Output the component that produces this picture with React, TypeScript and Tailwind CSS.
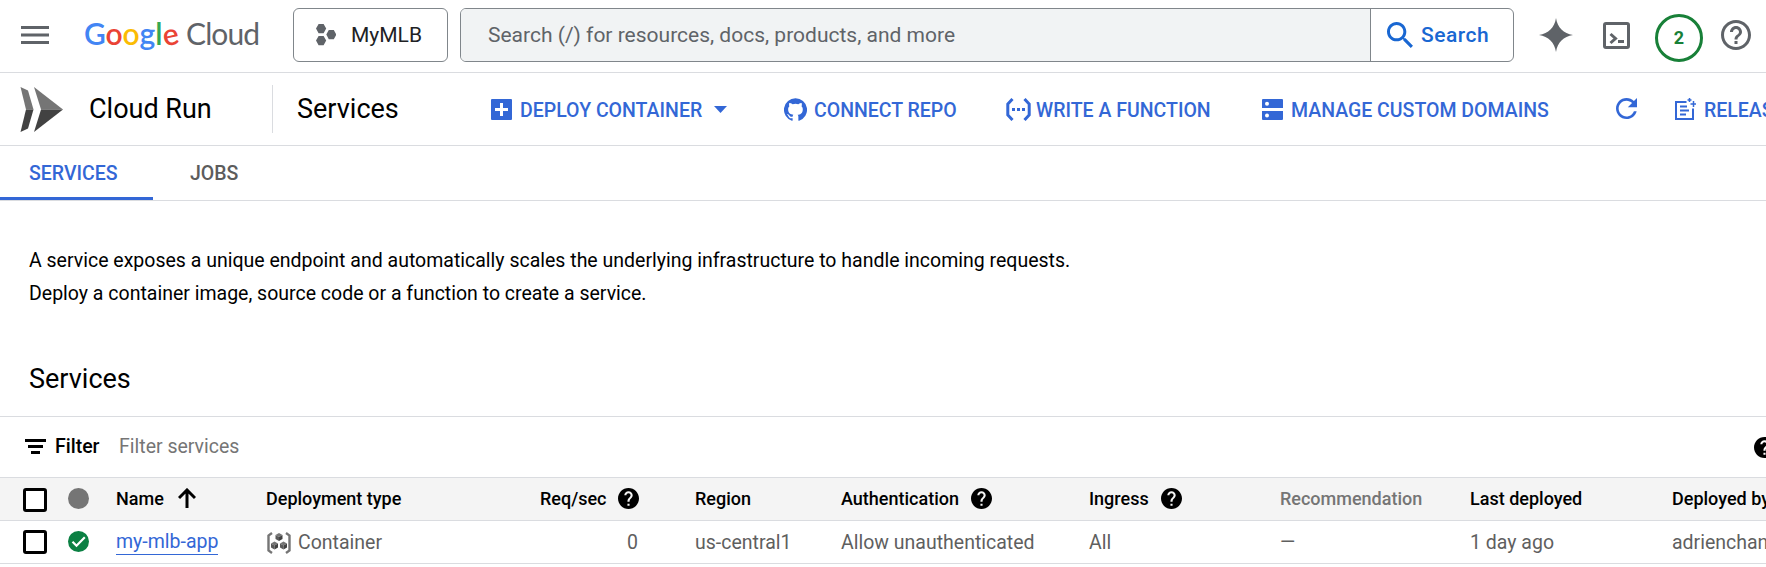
import React from "react";

function HelpFilled() {
  return (
    <svg viewBox="2 2 20 20" className="size-[21px] shrink-0" fill="#000">
      <path d="M12 2C6.48 2 2 6.48 2 12s4.48 10 10 10 10-4.48 10-10S17.52 2 12 2zm1 17h-2v-2h2v2zm2.07-7.75l-.9.92C13.45 12.9 13 13.5 13 15h-2v-.5c0-1.1.45-2.1 1.17-2.83l1.24-1.26c.37-.36.59-.86.59-1.41 0-1.1-.9-2-2-2s-2 .9-2 2H8c0-2.21 1.79-4 4-4s4 1.79 4 4c0 .88-.36 1.68-.93 2.25z" />
    </svg>
  );
}

function Logo() {
  return (
    <div className="mt-[15px] ml-[35px] flex w-[209px] shrink-0 items-baseline font-['Lato',sans-serif] leading-[36px]">
      <span className="w-[102px] shrink-0 whitespace-nowrap text-[30px] font-semibold tracking-[-0.1px]">
        <span className="text-[#4285f4]">G</span>
        <span className="text-[#ea4335]">o</span>
        <span className="text-[#fbbc04]">o</span>
        <span className="text-[#4285f4]">g</span>
        <span className="text-[#34a853]">l</span>
        <span className="inline-block -rotate-12 leading-none text-[#ea4335]">e</span>
      </span>
      <span className="text-[30px] tracking-[-0.9px] text-[#5f6368]">Cloud</span>
    </div>
  );
}

function TopBar() {
  return (
    <header className="flex h-[73px] items-start border-b border-[#dadce0] bg-white">
      <svg viewBox="0 0 28 18" className="mt-[26px] ml-[21px] h-[18px] w-7 shrink-0" fill="#5f6368">
        <path d="M0 0h28v3H0zM0 7.5h28v3H0zM0 15h28v3H0z" />
      </svg>
      <Logo />
      <button className="mt-2 flex h-[54px] w-[155px] shrink-0 items-center rounded-md border border-[#80868b] pl-[22px] text-[21px] text-[#202124]">
        <svg viewBox="0 0 20 22" className="mr-[15px] h-[22px] w-5 shrink-0" fill="#5f6368">
          <path d="M2.6 0h5l2.6 4.6-2.6 4.6h-5L0 4.6zM2.6 12h5l2.6 4.6-2.6 4.6h-5L0 16.6zM12.8 6h5l2.5 4.6-2.5 4.6h-5l-2.5-4.6z" />
        </svg>
        <span className="pt-0.5">MyMLB</span>
      </button>
      <div className="mt-2 ml-3 flex h-[54px] w-[1054px] shrink-0 overflow-hidden rounded-md border border-[#80868b]">
        <div className="flex w-[910px] items-center border-r border-[#80868b] bg-[#f1f3f4] pt-0.5 pl-[27px] text-[21px] text-[#5f6368]">
          Search (/) for resources, docs, products, and more
        </div>
        <div className="flex items-center pl-4 text-[21px] font-medium tracking-[0.5px] text-[#1967d2]">
          <svg viewBox="3 3 17.5 17.5" className="mr-2 size-[26px]" fill="#1967d2">
            <path d="M15.5 14h-.79l-.28-.27C15.41 12.59 16 11.11 16 9.5 16 5.91 13.09 3 9.5 3S3 5.91 3 9.5 5.91 16 9.5 16c1.61 0 3.09-.59 4.23-1.57l.27.28v.79l5 4.99L20.49 19l-4.99-5zm-6 0C7.01 14 5 11.99 5 9.5S7.01 5 9.5 5 14 7.01 14 9.5 11.99 14 9.5 14z" />
          </svg>
          <span className="pt-0.5">Search</span>
        </div>
      </div>
      <svg viewBox="0 0 34 34" className="mt-[18px] ml-[25px] size-[34px] shrink-0" fill="#5f6368">
        <path d="M17 0C18.5 9.5 24.5 15.5 34 17 24.5 18.5 18.5 24.5 17 34 15.5 24.5 9.5 18.5 0 17 9.5 15.5 15.5 9.5 17 0z" />
      </svg>
      <svg viewBox="0 0 27 27" className="mt-[22px] ml-[30px] size-[27px] shrink-0" fill="none" stroke="#5f6368">
        <rect x="1.5" y="1.5" width="24" height="24" rx="1.5" strokeWidth="3" />
        <path d="M7.5 12l5 4.5-5 4.5" strokeWidth="3" />
        <path d="M15 19.5h6" strokeWidth="3" />
      </svg>
      <div className="mt-[14px] ml-[25px] flex size-12 shrink-0 items-center justify-center rounded-full border-[3px] border-[#188038] pb-px text-[18px] font-bold text-[#188038]">
        2
      </div>
      <svg viewBox="2 2 20 20" className="mt-5 ml-[18px] size-[30px] shrink-0" fill="#5f6368">
        <path d="M11 18h2v-2h-2v2zm1-16C6.48 2 2 6.48 2 12s4.48 10 10 10 10-4.48 10-10S17.52 2 12 2zm0 18c-4.41 0-8-3.59-8-8s3.59-8 8-8 8 3.59 8 8-3.59 8-8 8zm0-14c-2.21 0-4 1.79-4 4h2c0-1.1.9-2 2-2s2 .9 2 2c0 2-3 1.75-3 5h2c0-2.25 3-2.5 3-5 0-2.21-1.79-4-4-4z" />
      </svg>
    </header>
  );
}

function Action({ icon, label, className }: { icon: React.ReactNode; label: string; className: string }) {
  return (
    <button className={`flex shrink-0 items-center whitespace-nowrap ${className}`}>
      {icon}
      <span className="pt-1">{label}</span>
    </button>
  );
}

function ServiceBar() {
  return (
    <div className="flex h-[73px] items-center overflow-hidden border-b border-[#dadce0]">
      <svg viewBox="0 0 43 45" className="ml-5 h-[45px] w-[43px] shrink-0">
        <path d="M.5 0l7.5 3.5 5.5 19H6z" fill="#757575" />
        <path d="M13.5 22.5L8 41.5.5 45 6 22.5z" fill="#424242" />
        <path d="M14 0l29 22.5H21z" fill="#757575" />
        <path d="M43 22.5L14 45l7-22.5z" fill="#424242" />
      </svg>
      <div className="ml-[26px] w-[183px] shrink-0 text-[27px] text-black">Cloud Run</div>
      <div className="h-12 w-px shrink-0 bg-[#dadce0]" />
      <div className="ml-6 w-[194px] shrink-0 text-[27px] text-black">Services</div>
      <div className="flex items-center text-[19.5px] font-medium text-[#3367d6]">
        <Action
          className="w-[223px] gap-2"
          label="DEPLOY CONTAINER"
          icon={
            <svg viewBox="0 0 21 21" className="size-[21px]">
              <rect width="21" height="21" rx="1" fill="#3367d6" />
              <path d="M10.5 4v13M4 10.5h13" stroke="#fff" strokeWidth="3" />
            </svg>
          }
        />
        <svg viewBox="0 0 13 7" className="h-[7px] w-[13px] shrink-0" fill="#3367d6">
          <path d="M0 0h13L6.5 7z" />
        </svg>
        <Action
          className="ml-[57px] w-[222px] gap-[7px]"
          label="CONNECT REPO"
          icon={
            <svg viewBox="0 0 24 24" className="size-[23px]" fill="#3367d6">
              <path d="M12 .3a12 12 0 0 0-3.8 23.4c.6.1.8-.3.8-.6v-2c-3.3.7-4-1.6-4-1.6-.6-1.4-1.4-1.8-1.4-1.8-1-.7.1-.7.1-.7 1.2 0 1.9 1.2 1.9 1.2 1 1.8 2.8 1.3 3.5 1 0-.8.4-1.3.7-1.6-2.7-.3-5.5-1.3-5.5-6 0-1.2.5-2.3 1.3-3.1-.2-.4-.6-1.6 0-3.2 0 0 1-.3 3.4 1.2a11.5 11.5 0 0 1 6 0c2.3-1.5 3.3-1.2 3.3-1.2.6 1.6.2 2.8 0 3.2.9.8 1.3 1.9 1.3 3.2 0 4.6-2.8 5.6-5.5 5.9.5.4.9 1 .9 2.2v3.3c0 .3.1.7.8.6A12 12 0 0 0 12 .3" />
            </svg>
          }
        />
        <Action
          className="w-[256px] gap-[5px]"
          label="WRITE A FUNCTION"
          icon={
            <svg viewBox="0 0 25 23" className="h-[23px] w-[25px]" fill="none" stroke="#3367d6">
              <path d="M6.5 1L1.8 6v11l4.7 5M18.5 1l4.7 5v11l-4.7 5" strokeWidth="3" />
              <path d="M6 11.5h3M11 11.5h3M16 11.5h3" strokeWidth="3" />
            </svg>
          }
        />
        <Action
          className="w-[354px] gap-2"
          label="MANAGE CUSTOM DOMAINS"
          icon={
            <svg viewBox="0 0 21 21" className="size-[21px]">
              <path d="M1 0h19a1 1 0 0 1 1 1v8H0V1a1 1 0 0 1 1-1zM0 12h21v8a1 1 0 0 1-1 1H1a1 1 0 0 1-1-1z" fill="#3367d6" />
              <circle cx="5" cy="4.8" r="2" fill="#fff" />
              <circle cx="5" cy="16.5" r="2" fill="#fff" />
            </svg>
          }
        />
        <svg viewBox="4 4 16 16" className="mb-0.5 size-[21px] shrink-0" fill="#3367d6">
          <path d="M17.65 6.35C16.2 4.9 14.21 4 12 4c-4.42 0-7.99 3.58-7.99 8s3.57 8 7.99 8c3.73 0 6.84-2.55 7.73-6h-2.08c-.82 2.33-3.04 4-5.65 4-3.31 0-6-2.69-6-6s2.69-6 6-6c1.66 0 3.14.69 4.22 1.78L13 11h7V4l-2.35 2.35z" />
        </svg>
        <Action
          className="ml-[38px] gap-2"
          label="RELEASE NOTES"
          icon={
            <svg viewBox="0 0 21 22" className="h-[22px] w-[21px]" fill="none" stroke="#3367d6" strokeWidth="2">
              <path d="M11.5 4H1v17h17V10.5" />
              <path d="M5 8.5h7M5 12.5h9M5 16.5h6" />
              <path d="M14.5 0v4M12.5 2h4M18.5 3v6M15.5 6h6" strokeWidth="1.5" />
            </svg>
          }
        />
      </div>
    </div>
  );
}

function Checkbox() {
  return <span className="size-6 rounded-[3px] border-[3px] border-black bg-white" />;
}

function ContainerIcon() {
  const cubes = [
    [12, 5],
    [7.5, 13.5],
    [16.5, 13.5],
  ];
  return (
    <svg viewBox="0 0 24 22" className="h-[22px] w-6">
      <path d="M5 1L1.5 3.5v15L5 21M19 1l3.5 2.5v15L19 21" fill="none" stroke="#757575" strokeWidth="2.4" />
      {cubes.map(([x, y]) => (
        <g key={x} transform={`translate(${x} ${y})`}>
          <path d="M0-4l3.5 2L0 0l-3.5-2z" fill="#757575" />
          <path d="M-3.5-2L0 0v4l-3.5-2z" fill="#5a5a5a" />
          <path d="M3.5-2L0 0v4l3.5-2z" fill="#424242" />
        </g>
      ))}
    </svg>
  );
}

const cols =
  "grid grid-cols-[23px_45px_48px_150px_274px_155px_146px_248px_191px_190px_202px_300px] items-center overflow-hidden whitespace-nowrap";

export default function App() {
  return (
    <div className="h-[567px] w-[1766px] overflow-hidden bg-white font-['Roboto',sans-serif] text-[19.5px] text-black">
      <TopBar />
      <ServiceBar />
      <nav className="flex h-[55px] border-b border-[#dadce0] font-medium">
        <div className="flex w-[153px] items-center border-b-[3px] border-[#3367d6] pt-1 pl-[29px] text-[#3367d6]">SERVICES</div>
        <div className="flex items-center pt-px pl-[37px] text-[#5c5c5c]">JOBS</div>
      </nav>
      <main>
        <p className="h-[150px] pt-[43px] pl-[29px] leading-[33px]">
          A service exposes a unique endpoint and automatically scales the underlying infrastructure to handle incoming requests.
          <br />
          Deploy a container image, source code or a function to create a service.
        </p>
        <h2 className="h-[65px] pt-2 pl-[29px] text-[27px] leading-[40px]">Services</h2>
        <div className="flex h-[61px] items-center border-t border-[#dadce0] pl-[25px]">
          <svg viewBox="0 0 21 15" className="mr-[9px] mb-px h-[15px] w-[21px] shrink-0">
            <path d="M0 0h21v3H0zM3 6h15v3H3zM6 12h9v3H6z" />
          </svg>
          <span className="w-16 shrink-0 font-medium">Filter</span>
          <span className="w-[1635px] shrink-0 text-[#757575]">Filter services</span>
          <HelpFilled />
        </div>
        <div className={`${cols} h-11 border-y border-[#dadce0] bg-[#f4f4f4] pb-[2px] text-[18px] font-medium`}>
          <span />
          <span className="flex pt-[3px]">
            <Checkbox />
          </span>
          <span className="size-[21px] rounded-full bg-[#757575]" />
          <span className="flex items-center gap-[14px]">
            Name
            <svg viewBox="0 0 18 20" className="h-5 w-[18px]" fill="none" stroke="#000" strokeWidth="3">
              <path d="M9 20V2M1 10l8-8 8 8" />
            </svg>
          </span>
          <span>Deployment type</span>
          <span className="flex items-center gap-3">
            Req/sec <HelpFilled />
          </span>
          <span>Region</span>
          <span className="flex items-center gap-3">
            Authentication <HelpFilled />
          </span>
          <span className="flex items-center gap-3">
            Ingress <HelpFilled />
          </span>
          <span className="text-[#757575]">Recommendation</span>
          <span>Last deployed</span>
          <span>Deployed by</span>
        </div>
        <div className={`${cols} h-[43px] border-b border-[#dadce0] text-[#5f5f5f]`}>
          <span />
          <Checkbox />
          <svg viewBox="0 0 21 21" className="mb-px size-[21px]">
            <circle cx="10.5" cy="10.5" r="10.5" fill="#0b8043" />
            <path d="M4.5 10.8l4 4L16.8 6.3" fill="none" stroke="#fff" strokeWidth="2.2" />
          </svg>
          <a className="justify-self-start border-b border-[#3367d6] leading-6 text-[#3367d6]">my-mlb-app</a>
          <span className="flex items-center gap-[7px] pt-px pl-px">
            <ContainerIcon />
            Container
          </span>
          <span className="w-[98px] pt-px text-right">0</span>
          <span className="pt-px">us-central1</span>
          <span className="pt-px">Allow unauthenticated</span>
          <span className="pt-px">All</span>
          <span className="pt-px">—</span>
          <span className="pt-px">1 day ago</span>
          <span className="pt-px">adrienchan</span>
        </div>
      </main>
    </div>
  );
}
